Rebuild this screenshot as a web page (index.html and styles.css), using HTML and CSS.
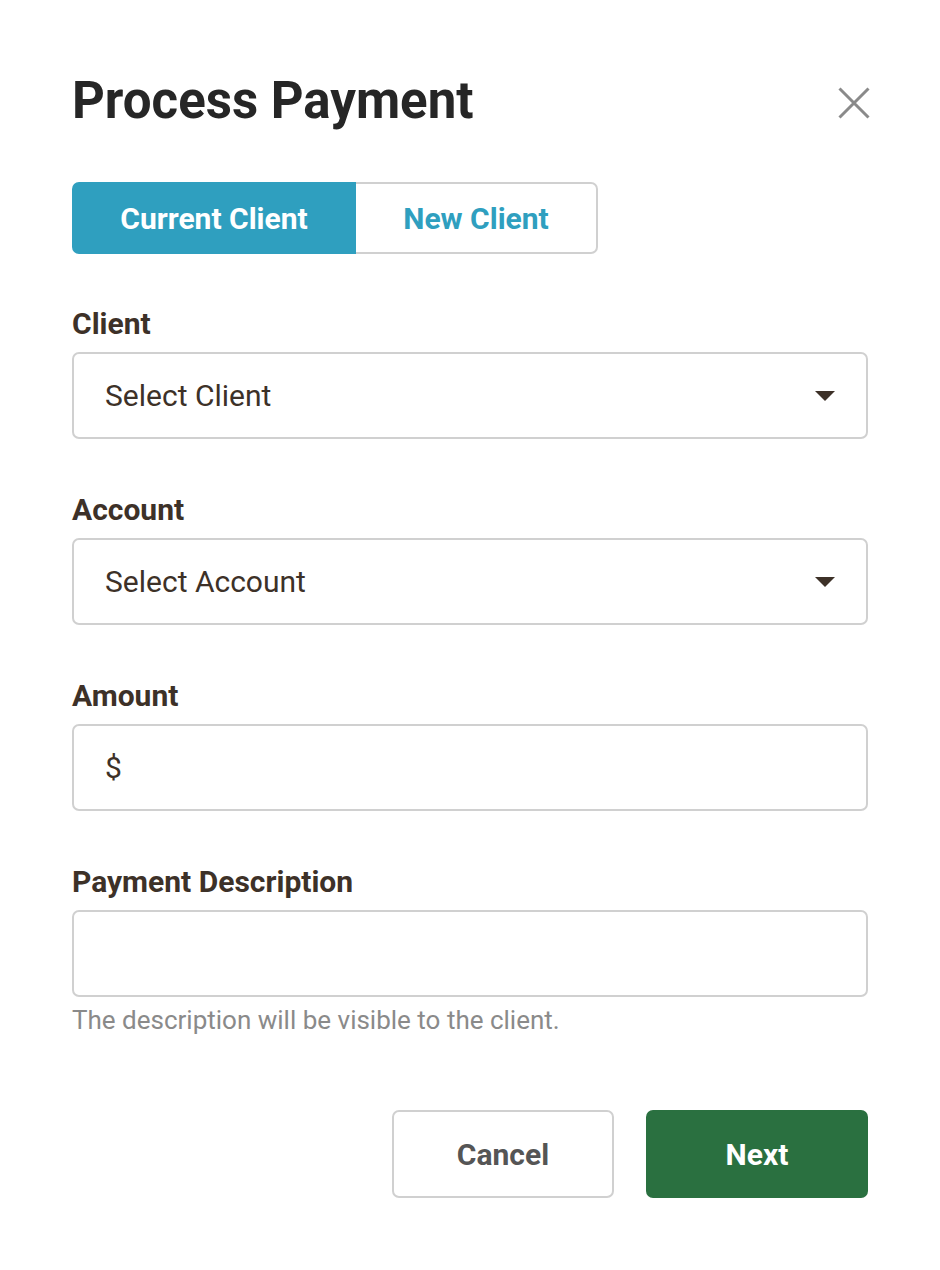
FILE: index.html
```html
<!DOCTYPE html>
<html lang="en">
<head>
<meta charset="utf-8">
<title>Process Payment</title>
<link rel="stylesheet" href="styles.css">
</head>
<body>
<div class="modal">
  <div class="header">
    <h1 class="title">Process Payment</h1>
    <button class="close" aria-label="Close">
      <svg width="32" height="32" viewBox="0 0 32 32"><path d="M1.5 1.5 L30.5 30.5 M30.5 1.5 L1.5 30.5" stroke="#8a8a8a" stroke-width="3" fill="none"/></svg>
    </button>
  </div>
  <div class="toggle">
    <button class="seg seg-active">Current Client</button>
    <button class="seg">New Client</button>
  </div>
  <div class="field">
    <label class="label">Client</label>
    <div class="box select">
      <span>Select Client</span>
      <span class="caret"></span>
    </div>
  </div>
  <div class="field">
    <label class="label">Account</label>
    <div class="box select">
      <span>Select Account</span>
      <span class="caret"></span>
    </div>
  </div>
  <div class="field">
    <label class="label">Amount</label>
    <div class="box">
      <span>$</span>
    </div>
  </div>
  <div class="field">
    <label class="label">Payment Description</label>
    <div class="box"></div>
    <p class="help">The description will be visible to the client.</p>
  </div>
  <div class="actions">
    <button class="btn btn-cancel">Cancel</button>
    <button class="btn btn-next">Next</button>
  </div>
</div>
</body>
</html>
```
FILE: styles.css
```css
* { box-sizing: border-box; }
body {
  margin: 0;
  background: #ffffff;
  font-family: Roboto, "Liberation Sans", sans-serif;
}
.modal {
  width: 940px;
  padding: 70px 72px 0 72px;
}
.header {
  display: flex;
  justify-content: space-between;
  align-items: flex-start;
}
.title {
  margin: 0;
  font-size: 51px;
  line-height: 62px;
  font-weight: 700;
  color: #262626;
}
.close {
  background: none;
  border: 0;
  padding: 0;
  margin-top: 17px;
  margin-right: -2px;
  width: 32px;
  height: 32px;
}
.toggle {
  margin-top: 50px;
  display: flex;
  width: 526px;
  height: 72px;
}
.seg {
  font-family: Roboto, "Liberation Sans", sans-serif;
  font-size: 30px;
  font-weight: 700;
  color: #2f9fbf;
  background: #ffffff;
  border: 2px solid #d0d0d0;
  border-left: 0;
  border-radius: 0 7px 7px 0;
  flex: 1 1 242px;
  padding: 0;
}
.seg-active {
  flex: 0 0 284px;
  background: #2f9fbf;
  color: #ffffff;
  border: 0;
  border-radius: 7px 0 0 7px;
}
.field {
  margin-top: 52px;
  display: flex;
  flex-direction: column;
}
.field + .field { margin-top: 53px; }
.label {
  font-size: 30px;
  line-height: 36px;
  font-weight: 700;
  color: #3d3128;
  margin-bottom: 10px;
}
.box {
  height: 87px;
  border: 2px solid #d0d0d0;
  border-radius: 7px;
  display: flex;
  align-items: center;
  justify-content: space-between;
  padding: 0 31px 0 31px;
  font-size: 30px;
  color: #3d3128;
}
.caret {
  width: 0;
  height: 0;
  border-left: 10px solid transparent;
  border-right: 10px solid transparent;
  border-top: 10px solid #3d3128;
}
.help {
  margin: 7px 0 0;
  font-size: 26px;
  line-height: 32px;
  color: #8a8a8a;
}
.actions {
  margin-top: 74px;
  display: flex;
  justify-content: flex-end;
  gap: 32px;
}
.btn {
  width: 222px;
  height: 88px;
  border-radius: 7px;
  font-family: Roboto, "Liberation Sans", sans-serif;
  font-size: 30px;
  font-weight: 700;
}
.btn-cancel {
  background: #ffffff;
  border: 2px solid #d0d0d0;
  color: #555555;
}
.btn-next {
  background: #2a7040;
  border: 0;
  color: #ffffff;
}
```
